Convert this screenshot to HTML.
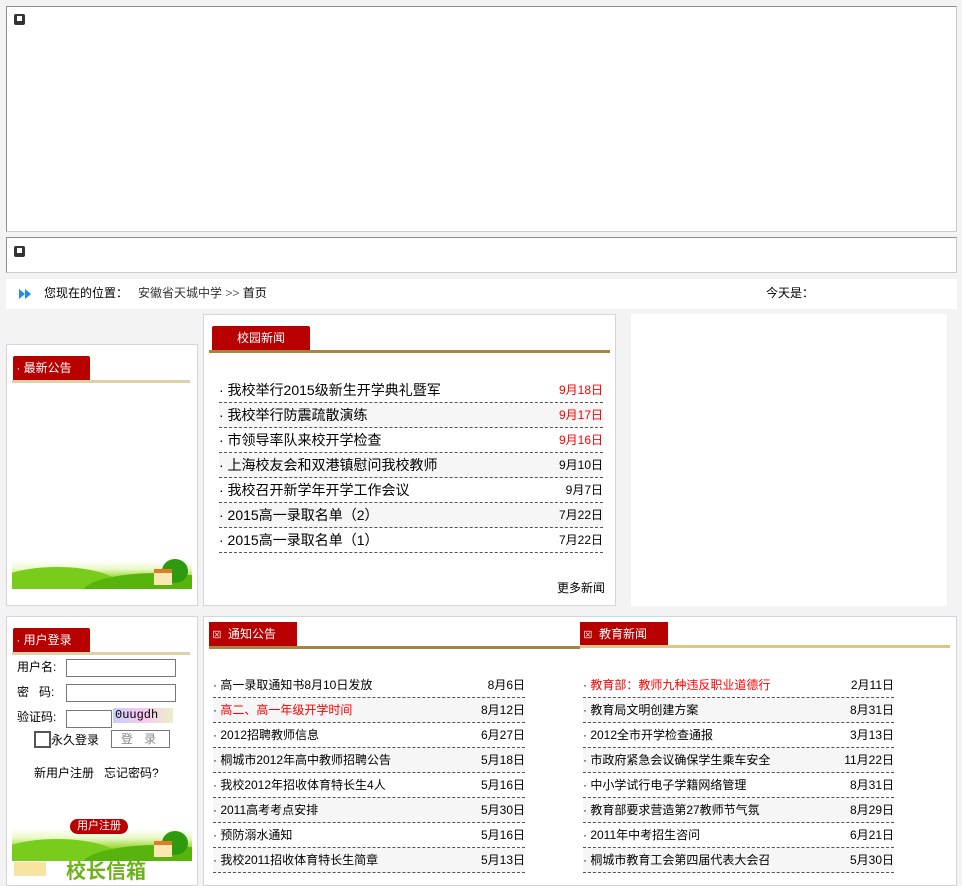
<!DOCTYPE html>
<html><head><meta charset="utf-8">
<style>
*{margin:0;padding:0;box-sizing:border-box}
body{width:962px;height:875px;background:#f3f3f3;position:relative;overflow:hidden;font-family:"Liberation Sans","Noto Sans CJK SC","WenQuanYi Zen Hei",sans-serif;font-size:12px;color:#000}
.a{position:absolute}
.box{position:absolute;background:#fff;border:1px solid #d4d4dc}
.ico{position:absolute;width:11px;height:11px;background:#333;border-radius:2px}
.ico:after{content:"";position:absolute;left:3px;top:2px;width:5px;height:5px;background:#fff}
.tab{position:absolute;background:#b80000;color:#fff;font-size:12px;line-height:24px;height:24px}
.row{position:absolute;height:25px;border-bottom:1px dashed #555;line-height:24px}
.row.g{background:#f6f6f6}
.row .d{position:absolute;right:0;top:0}
.red{color:#f00}
.land{position:absolute;overflow:hidden;background:linear-gradient(#fff 0%,#fff 30%,#eaf8c8 50%,#9ad630 72%,#5cbc0c 100%)}
.land .h1{position:absolute;left:-20px;width:130px;bottom:-20px;height:42px;border-radius:50%;background:#78cc1c}
.land .h2{position:absolute;left:70px;width:150px;bottom:-24px;height:40px;border-radius:50%;background:#58b40c}
.land .t{position:absolute;right:4px;bottom:6px;width:26px;height:24px;border-radius:50%;background:#2e9a10}
.land .hs{position:absolute;right:20px;bottom:4px;width:18px;height:16px;background:#fbe7b0;border-top:4px solid #e07b2a}
input{position:absolute;border:1px solid #777;background:#fff;height:19px}
</style></head><body>

<div class="a" style="left:6px;top:6px;width:951px;height:226px;background:#fff;border:1px solid #8e8e8e;border-color:#8e8e8e #ccc #ccc #8e8e8e"></div>
<div class="ico" style="left:14px;top:14px"></div>
<div class="a" style="left:6px;top:237px;width:951px;height:36px;background:#fff;border:1px solid #8e8e8e;border-color:#8e8e8e #ccc #ccc #8e8e8e"></div>
<div class="ico" style="left:14px;top:246px"></div>

<div class="a" style="left:6px;top:279px;width:951px;height:30px;background:#fff"></div>
<div class="a" style="left:19px;top:289px;width:0;height:0;border-left:6px solid #1e8ee8;border-top:5px solid transparent;border-bottom:5px solid transparent"></div>
<div class="a" style="left:25px;top:289px;width:0;height:0;border-left:6px solid #1e8ee8;border-top:5px solid transparent;border-bottom:5px solid transparent"></div>
<div class="a" style="left:44px;top:285px;font-size:12px;line-height:17px">您现在的位置：&nbsp;&nbsp;&nbsp;<span style="color:#333">安徽省天城中学</span> <span style="color:#666">&gt;&gt;</span> 首页</div>
<div class="a" style="left:766px;top:285px;line-height:17px">今天是：</div>

<div class="box" style="left:6px;top:344px;width:192px;height:262px"></div>
<div class="tab" style="left:13px;top:356px;width:77px;border-radius:2px 2px 0 0">&nbsp;· 最新公告</div>
<div class="a" style="left:12px;top:380px;width:178px;height:3px;background:#e0d0a8"></div>
<div class="land" style="left:12px;top:549px;width:180px;height:40px"><div class="h1"></div><div class="h2"></div><div class="t"></div><div class="hs"></div></div>

<div class="box" style="left:203px;top:314px;width:413px;height:292px"></div>
<div class="tab" style="left:212px;top:326px;width:98px;text-align:center;border-radius:2px 2px 0 0;height:25px">校园新闻</div>
<div class="a" style="left:209px;top:350px;width:401px;height:3px;background:#a8843c"></div>
<div class="a" style="left:219px;top:378px;width:384px;font-size:14px">
<div class="row" style="top:0;width:384px">· 我校举行2015级新生开学典礼暨军<span class="d red" style="font-size:12px">9月18日</span></div>
<div class="row g" style="top:25px;width:384px">· 我校举行防震疏散演练<span class="d red" style="font-size:12px">9月17日</span></div>
<div class="row" style="top:50px;width:384px">· 市领导率队来校开学检查<span class="d red" style="font-size:12px">9月16日</span></div>
<div class="row g" style="top:75px;width:384px">· 上海校友会和双港镇慰问我校教师<span class="d" style="font-size:12px">9月10日</span></div>
<div class="row" style="top:100px;width:384px">· 我校召开新学年开学工作会议<span class="d" style="font-size:12px">9月7日</span></div>
<div class="row g" style="top:125px;width:384px">· 2015高一录取名单（2）<span class="d" style="font-size:12px">7月22日</span></div>
<div class="row" style="top:150px;width:384px">· 2015高一录取名单（1）<span class="d" style="font-size:12px">7月22日</span></div>
</div>
<div class="a" style="left:557px;top:579px">更多新闻</div>

<div class="a" style="left:631px;top:314px;width:316px;height:292px;background:#fff"></div>

<div class="box" style="left:6px;top:616px;width:192px;height:270px"></div>
<div class="tab" style="left:13px;top:628px;width:77px;border-radius:2px 2px 0 0">&nbsp;· 用户登录</div>
<div class="a" style="left:12px;top:652px;width:178px;height:3px;background:#e0d0a8"></div>
<div class="a" style="left:17px;top:659px;line-height:17px">用户名:</div>
<input style="left:66px;top:659px;width:110px;height:18px">
<div class="a" style="left:17px;top:684px;line-height:17px">密&nbsp;&nbsp;&nbsp;码:</div>
<input style="left:66px;top:684px;width:110px;height:18px">
<div class="a" style="left:17px;top:709px;line-height:17px">验证码:</div>
<input style="left:66px;top:710px;width:46px;height:18px">
<div class="a" style="left:113px;top:708px;width:60px;height:15px;background:linear-gradient(90deg,#c8d0f8,#f8c8f0,#e8f0c8);font-family:'Liberation Mono',monospace;font-size:12px;line-height:15px;letter-spacing:0px;padding-left:2px">0uugdh</div>
<div class="a" style="left:34px;top:731px;width:17px;height:17px;border:2px solid #555;background:#fff"></div>
<div class="a" style="left:51px;top:732px;line-height:17px">永久登录</div>
<div class="a" style="left:111px;top:730px;width:59px;height:18px;border:1px solid #777;color:#888;text-align:center;line-height:16px;letter-spacing:4px">登 录</div>
<div class="a" style="left:34px;top:764px">新用户注册&nbsp;&nbsp;&nbsp;忘记密码?</div>
<div class="land" style="left:12px;top:815px;width:180px;height:46px"><div class="h1"></div><div class="h2"></div><div class="t"></div><div class="hs"></div></div>
<div class="a" style="left:70px;top:819px;width:58px;height:15px;background:#b80000;border-radius:8px;color:#fff;font-size:11px;line-height:15px;text-align:center">用户注册</div>
<div class="a" style="left:12px;top:861px;width:180px;height:14px;background:#fff"></div>
<div class="a" style="left:14px;top:862px;width:32px;height:14px;background:#f6e4a0"></div>
<div class="a" style="left:66px;top:862px;color:#6cb21a;font-size:20px;font-weight:bold;line-height:20px">校长信箱</div>

<div class="box" style="left:203px;top:616px;width:754px;height:270px"></div>
<div class="tab" style="left:209px;top:622px;width:88px">&nbsp;<span style="font-size:9px">⊠</span>&nbsp; 通知公告</div>
<div class="a" style="left:209px;top:646px;width:371px;height:3px;background:#a8843c"></div>
<div class="tab" style="left:580px;top:622px;width:88px">&nbsp;<span style="font-size:9px">⊠</span>&nbsp; 教育新闻</div>
<div class="a" style="left:580px;top:645px;width:370px;height:3px;background:#e0c480"></div>

<div class="a" style="left:213px;top:673px;width:312px">
<div class="row" style="top:0;width:312px">· 高一录取通知书8月10日发放<span class="d">8月6日</span></div>
<div class="row g" style="top:25px;width:312px">· <span class="red">高二、高一年级开学时间</span><span class="d">8月12日</span></div>
<div class="row" style="top:50px;width:312px">· 2012招聘教师信息<span class="d">6月27日</span></div>
<div class="row g" style="top:75px;width:312px">· 桐城市2012年高中教师招聘公告<span class="d">5月18日</span></div>
<div class="row" style="top:100px;width:312px">· 我校2012年招收体育特长生4人<span class="d">5月16日</span></div>
<div class="row g" style="top:125px;width:312px">· 2011高考考点安排<span class="d">5月30日</span></div>
<div class="row" style="top:150px;width:312px">· 预防溺水通知<span class="d">5月16日</span></div>
<div class="row g" style="top:175px;width:312px">· 我校2011招收体育特长生简章<span class="d">5月13日</span></div>
</div>

<div class="a" style="left:583px;top:673px;width:311px">
<div class="row" style="top:0;width:311px">· <span class="red">教育部：教师九种违反职业道德行</span><span class="d">2月11日</span></div>
<div class="row g" style="top:25px;width:311px">· 教育局文明创建方案<span class="d">8月31日</span></div>
<div class="row" style="top:50px;width:311px">· 2012全市开学检查通报<span class="d">3月13日</span></div>
<div class="row g" style="top:75px;width:311px">· 市政府紧急会议确保学生乘车安全<span class="d">11月22日</span></div>
<div class="row" style="top:100px;width:311px">· 中小学试行电子学籍网络管理<span class="d">8月31日</span></div>
<div class="row g" style="top:125px;width:311px">· 教育部要求营造第27教师节气氛<span class="d">8月29日</span></div>
<div class="row" style="top:150px;width:311px">· 2011年中考招生咨问<span class="d">6月21日</span></div>
<div class="row g" style="top:175px;width:311px">· 桐城市教育工会第四届代表大会召<span class="d">5月30日</span></div>
</div>

</body></html>
